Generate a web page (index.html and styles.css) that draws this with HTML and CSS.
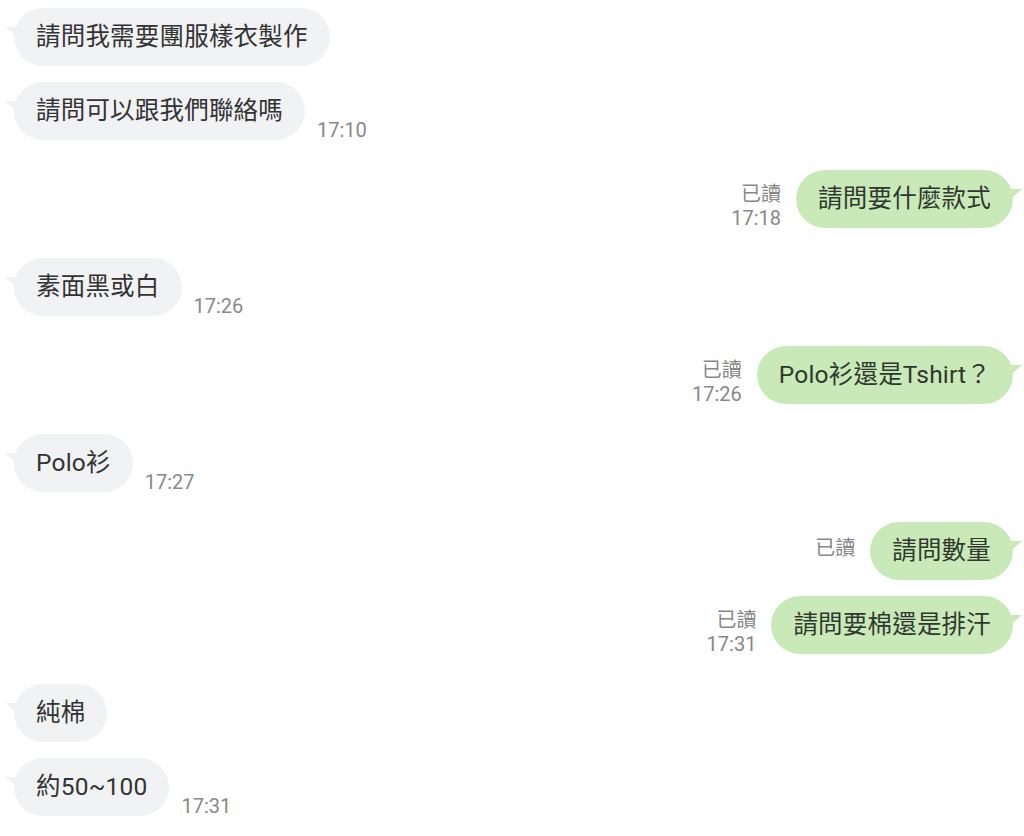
FILE: index.html
```html
<!DOCTYPE html>
<html lang="zh-Hant">
<head>
<meta charset="utf-8">
<title>Chat</title>
<link rel="stylesheet" href="styles.css">
</head>
<body>
<div class="chat">
  <div class="row in first">
    <div class="bubble">請問我需要團服樣衣製作</div>
  </div>
  <div class="row in cont">
    <div class="bubble">請問可以跟我們聯絡嗎</div>
    <div class="meta"><span>17:10</span></div>
  </div>
  <div class="row out">
    <div class="meta"><span>已讀</span><span>17:18</span></div>
    <div class="bubble">請問要什麼款式</div>
  </div>
  <div class="row in">
    <div class="bubble">素面黑或白</div>
    <div class="meta"><span>17:26</span></div>
  </div>
  <div class="row out">
    <div class="meta"><span>已讀</span><span>17:26</span></div>
    <div class="bubble">Polo衫還是Tshirt？</div>
  </div>
  <div class="row in">
    <div class="bubble">Polo衫</div>
    <div class="meta"><span>17:27</span></div>
  </div>
  <div class="row out">
    <div class="meta no-time"><span>已讀</span></div>
    <div class="bubble">請問數量</div>
  </div>
  <div class="row out cont">
    <div class="meta"><span>已讀</span><span>17:31</span></div>
    <div class="bubble">請問要棉還是排汗</div>
  </div>
  <div class="row in">
    <div class="bubble">純棉</div>
  </div>
  <div class="row in cont">
    <div class="bubble">約50~100</div>
    <div class="meta"><span>17:31</span></div>
  </div>
</div>
</body>
</html>
```
FILE: styles.css
```css
html, body {
  margin: 0;
  padding: 0;
  background: #ffffff;
}
body {
  font-family: Roboto, "Noto Sans CJK TC", sans-serif;
  color: #333333;
}
.chat {
  display: flex;
  flex-direction: column;
  padding-top: 8px;
}
.row {
  display: flex;
  align-items: flex-end;
  margin-top: 30px;
}
.row.first {
  margin-top: 0;
}
.row.cont {
  margin-top: 16px;
}
.row.in {
  justify-content: flex-start;
  padding-left: 14px;
}
.row.out {
  justify-content: flex-end;
  padding-right: 11px;
}
.bubble {
  position: relative;
  height: 58px;
  box-sizing: border-box;
  padding: 0 22px;
  display: flex;
  align-items: center;
  border-radius: 29px;
  font-size: 24.5px;
  line-height: 30px;
  white-space: nowrap;
  letter-spacing: 0.2px;
}
.row.in .bubble {
  background: #f1f2f4;
  color: #333333;
}
.row.out .bubble {
  background: #c9e9b9;
  color: #30382e;
}
.bubble::before {
  content: "";
  position: absolute;
  top: 19px;
  width: 14px;
  height: 12px;
}
.row.in .bubble::before {
  left: -9px;
  background: #f1f2f4;
  clip-path: polygon(0 0, 100% 0, 100% 100%);
}
.row.out .bubble::before {
  right: -9px;
  background: #c9e9b9;
  clip-path: polygon(0 0, 100% 0, 0 100%);
}
.meta {
  display: flex;
  flex-direction: column;
  font-size: 20px;
  line-height: 24px;
  color: #888888;
  margin-bottom: -2px;
}
.row.in .meta {
  margin-left: 12px;
  align-items: flex-start;
}
.row.out .meta {
  margin-right: 15px;
  align-items: flex-end;
}
.meta.no-time {
  padding-bottom: 22px;
}
```
